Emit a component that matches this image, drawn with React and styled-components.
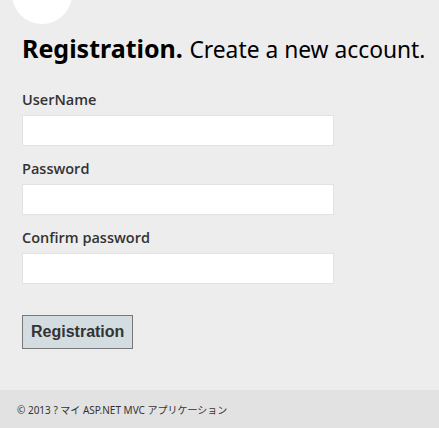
import React from "react"
import styled, { createGlobalStyle } from "styled-components"

const GlobalStyle = createGlobalStyle`
  html, body {
    margin: 0;
    padding: 0;
    background: #ededed;
  }
  body {
    font-family: "Segoe UI", "Noto Sans", "Open Sans", sans-serif;
    color: #333;
  }
`

const Page = styled.div`
  display: flex;
  flex-direction: column;
  min-height: 428px;
`

const Header = styled.header`
  height: 24px;
  overflow: hidden;
  padding-left: 12px;
`

const Logo = styled.div`
  width: 60px;
  height: 60px;
  margin-top: -36px;
  border-radius: 50%;
  background: #fff;
`

const Main = styled.main`
  padding: 8px 22px 0;
  flex: 1;
`

const Title = styled.h1`
  margin: 0 0 26px;
  height: 32px;
  font-size: 25px;
  line-height: 32px;
  font-weight: 700;
  color: #000;
  white-space: nowrap;
`

const Subtitle = styled.span`
  font-weight: 400;
  font-size: 22.8px;
`

const Form = styled.form`
  display: flex;
  flex-direction: column;
`

const Field = styled.div`
  display: flex;
  flex-direction: column;
  margin-bottom: 13px;
`

const Label = styled.label`
  font-family: "Open Sans", "Noto Sans", sans-serif;
  font-size: 14.5px;
  line-height: 20px;
  font-weight: 600;
  color: #333;
`

const Input = styled.input`
  box-sizing: border-box;
  width: 312px;
  height: 31px;
  margin-top: 5px;
  padding: 5px;
  border: 1px solid #e2e2e2;
  background: #fff;
  font-size: 16px;
  outline: none;
`

const Actions = styled.div`
  padding-top: 18px;
`

const Button = styled.button`
  box-sizing: border-box;
  height: 34px;
  padding: 0 8px;
  background: #d3dce0;
  border: 1px solid #787878;
  font-family: "Liberation Sans", Arial, sans-serif;
  font-size: 16px;
  font-weight: 700;
  color: #333;
  cursor: pointer;
`

const Footer = styled.footer`
  margin-top: 41px;
  height: 38px;
  display: flex;
  align-items: center;
  padding-left: 17px;
  background: #e2e2e2;
  font-family: "Segoe UI", "Noto Sans", "Noto Sans CJK JP", sans-serif;
  font-size: 10px;
  color: #333;
`

const fields = [
  { id: "UserName", label: "UserName", type: "text" },
  { id: "Password", label: "Password", type: "password" },
  { id: "ConfirmPassword", label: "Confirm password", type: "password" },
]

const App = () => {
  return (
    <Page>
      <GlobalStyle />
      <Header>
        <Logo />
      </Header>
      <Main>
        <Title>
          Registration. <Subtitle>Create a new account.</Subtitle>
        </Title>
        <Form onSubmit={e => e.preventDefault()}>
          {fields.map(item => (
            <Field key={item.id}>
              <Label htmlFor={item.id}>{item.label}</Label>
              <Input id={item.id} type={item.type} />
            </Field>
          ))}
          <Actions>
            <Button type="submit">Registration</Button>
          </Actions>
        </Form>
      </Main>
      <Footer>© 2013 ? マイ ASP.NET MVC アプリケーション</Footer>
    </Page>
  )
}

export default App
